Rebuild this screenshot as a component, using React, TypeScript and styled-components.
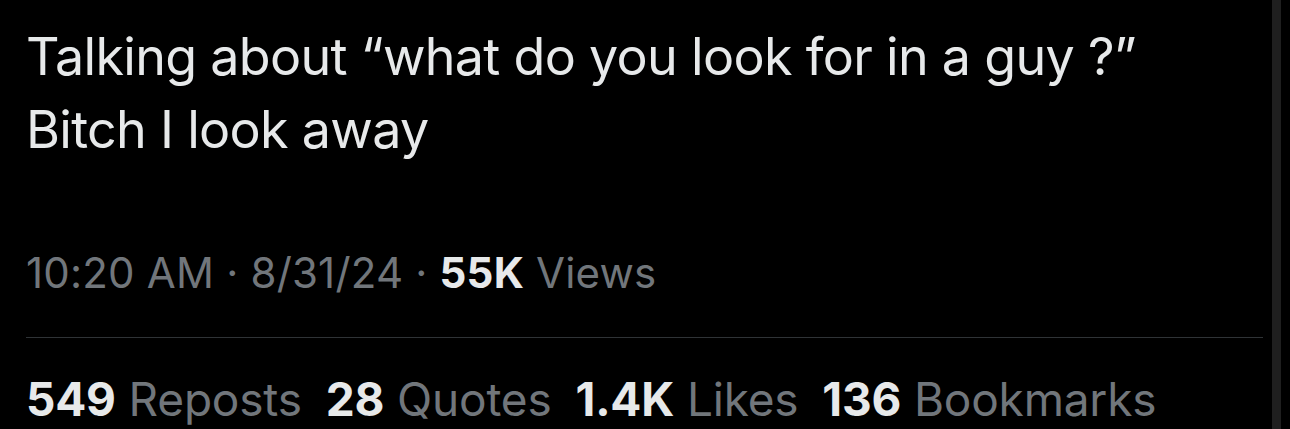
import React from "react";
import styled, { createGlobalStyle } from "styled-components";

const GlobalStyle = createGlobalStyle`
  html, body {
    margin: 0;
    padding: 0;
    background: #000;
  }
  body {
    font-family: Inter, "Noto Sans", "Liberation Sans", sans-serif;
  }
`;

const Page = styled.div`
  display: flex;
  width: 1290px;
  height: 429px;
  background: #000;
  overflow: hidden;
`;

const Content = styled.div`
  flex: 1;
  padding: 20px 9px 0 26px;
`;

const TweetText = styled.div`
  color: #e7e9ea;
  font-size: 52px;
  line-height: 73px;
  letter-spacing: -0.7px;
`;

const Meta = styled.div`
  margin-top: 82px;
  color: #71767b;
  font-size: 42px;
  line-height: 50px;
  letter-spacing: 0.2px;
`;

const Strong = styled.span`
  color: #e7e9ea;
  font-weight: 700;
`;

const Divider = styled.div`
  margin-top: 39px;
  height: 1px;
  background: #2f3336;
`;

const Stats = styled.div`
  display: flex;
  gap: 24px;
  margin-top: 36px;
  color: #71767b;
  font-size: 46px;
  line-height: 50px;
  letter-spacing: -0.2px;
  white-space: nowrap;
`;

const Stat = styled.span``;

const Track = styled.div`
  width: 9px;
  margin-right: 9px;
  background: #1f1f1f;
`;

const stats = [
  { value: "549", label: "Reposts" },
  { value: "28", label: "Quotes" },
  { value: "1.4K", label: "Likes" },
  { value: "136", label: "Bookmarks" },
];

const App = () => {
  return (
    <>
      <GlobalStyle />
      <Page>
        <Content>
          <TweetText>
            Talking about “what do you look for in a guy ?”
            <br />
            Bitch I look away
          </TweetText>
          <Meta>
            10:20 AM · 8/31/24 · <Strong>55K</Strong> Views
          </Meta>
          <Divider />
          <Stats>
            {stats.map((s) => (
              <Stat key={s.label}>
                <Strong>{s.value}</Strong> {s.label}
              </Stat>
            ))}
          </Stats>
        </Content>
        <Track />
      </Page>
    </>
  );
};

export default App;
